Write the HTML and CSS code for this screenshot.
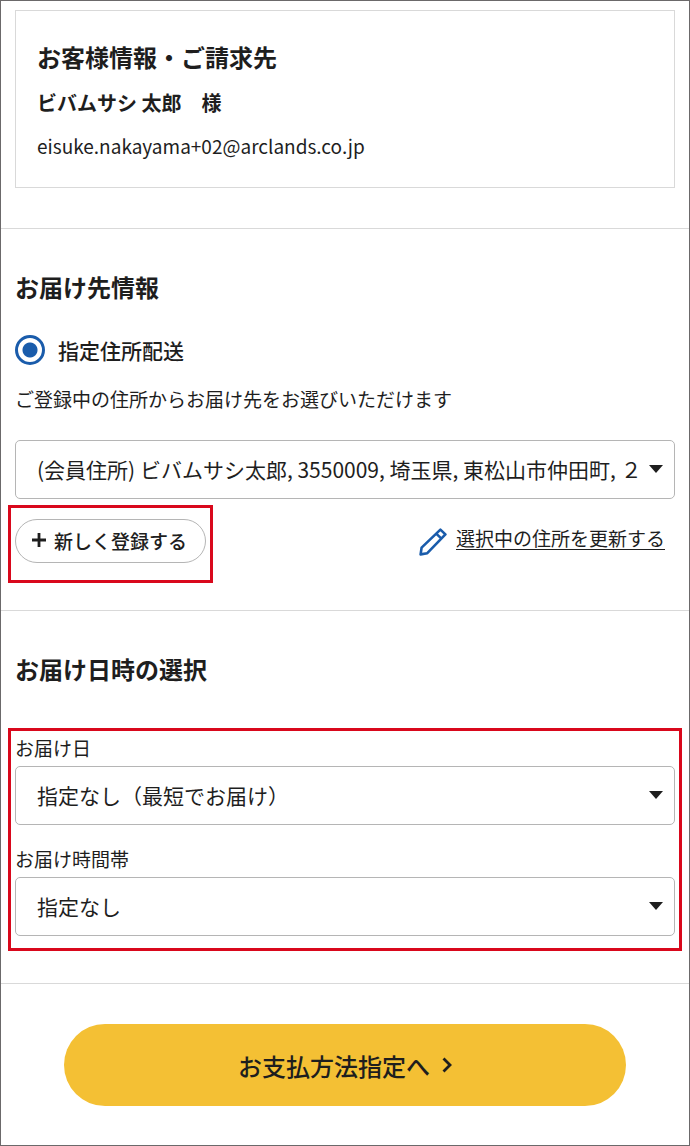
FILE: index.html
```
<!DOCTYPE html>
<html lang="ja">
<head>
    <meta charset="UTF-8">
    <meta name="viewport" content="width=device-width, initial-scale=1.0">
    <title>お届け先・お届け日時の指定</title>
    <link rel="stylesheet" href="styles.css">
</head>
<body>

    <form class="checkout">
        <section class="section section-customer">
            <div class="customer-card">
                <h2>お客様情報・ご請求先</h2>
                <p class="customer-name">ビバムサシ 太郎　様</p>
                <p class="customer-mail">eisuke.nakayama+02@arclands.co.jp</p>
            </div>
        </section>

        <section class="section section-address">
            <h2>お届け先情報</h2>
            <div class="radio">
                <input type="radio" name="delivery" id="delivery-address" checked>
                <label for="delivery-address">指定住所配送</label>
            </div>
            <label class="lead" for="address">ご登録中の住所からお届け先をお選びいただけます</label>
            <div class="select">
                <select id="address">
                    <option>(会員住所) ビバムサシ太郎, 3550009, 埼玉県, 東松山市仲田町, ２</option>
                </select>
            </div>
            <div class="address-actions">
                <div class="highlight">
                    <button type="button" class="btn-add">
                        <svg width="14" height="14" viewBox="0 0 14 14" aria-hidden="true">
                            <path d="M7 0v14M0 7h14" stroke="currentColor" stroke-width="2.8"/>
                        </svg>
                        新しく登録する
                    </button>
                </div>
                <a href="#" class="link-edit">
                    <svg width="28" height="28" viewBox="0 0 28 28" fill="none" stroke="#1a5cab" stroke-width="2.6" stroke-linejoin="round" aria-hidden="true">
                        <path d="M1.6 26.4l1-6.8L21.4 1.6l5 4.8L8.3 25.2z"/>
                        <path d="M17.2 5.6l5 4.8"/>
                    </svg>
                    <span>選択中の住所を更新する</span>
                </a>
            </div>
        </section>

        <section class="section section-date">
            <h2>お届け日時の選択</h2>
            <div class="highlight">
                <div class="field">
                    <label for="date">お届け日</label>
                    <div class="select">
                        <select id="date">
                            <option>指定なし（最短でお届け）</option>
                        </select>
                    </div>
                </div>
                <div class="field">
                    <label for="time">お届け時間帯</label>
                    <div class="select">
                        <select id="time">
                            <option>指定なし</option>
                        </select>
                    </div>
                </div>
            </div>
        </section>

        <div class="submit">
            <button type="submit" class="btn-next">
                お支払方法指定へ
                <svg width="10" height="16" viewBox="0 0 10 16" fill="none" aria-hidden="true">
                    <path d="M1.5 1.5L8 8l-6.5 6.5" stroke="currentColor" stroke-width="2.8"/>
                </svg>
            </button>
        </div>
    </form>

</body>
</html>
```
FILE: styles.css
```
* {
    box-sizing: border-box;
}

body {
    margin: 0;
    background-color: #fff;
    color: #1e1e1e;
    font-family: "Noto Sans CJK JP", sans-serif;
    font-size: 19px;
    line-height: 28px;
}

h2, p {
    margin: 0;
}

h2 {
    font-size: 24px;
    line-height: 36px;
    font-weight: bold;
}

button, select {
    font-family: inherit;
    color: inherit;
}

.checkout {
    border: 1px solid #6b696a;
    min-height: 100vh;
}

.section {
    padding: 40px 14px;
    border-bottom: 1px solid #d9d9d9;
}

/* customer */
.section-customer {
    padding-top: 9px;
}

.customer-card {
    padding: 28px 21px 27px;
    border: 1px solid #d9d9d9;
}

.customer-name {
    margin-top: 14px;
    font-size: 20px;
    font-weight: bold;
}

.customer-mail {
    margin-top: 15px;
}

/* address */
.section-address {
    padding-bottom: 27px;
}

.radio {
    display: flex;
    align-items: center;
    gap: 13px;
    margin-top: 30px;
    font-size: 21px;
    font-weight: 500;
}

.radio input {
    appearance: none;
    width: 30px;
    height: 30px;
    margin: 0;
    border: 3px solid #1a5cab;
    border-radius: 50%;
    background: radial-gradient(circle, #1a5cab 7px, #fff 8px);
}

.lead {
    display: block;
    margin: 20px 0 27px;
}

.select {
    position: relative;
}

.select select {
    display: block;
    appearance: none;
    width: 100%;
    height: 59px;
    padding: 0 20px 2px 21px;
    border: 1px solid #b5b5b5;
    border-radius: 5px;
    background-color: #fff;
    font-size: 21px;
}

.select::after {
    content: "";
    position: absolute;
    top: 25px;
    right: 12px;
    border: 7px solid transparent;
    border-top: 8px solid #1e1e1e;
    border-bottom: 0;
    pointer-events: none;
}

.highlight {
    margin: 0 -7px;
    padding: 4px;
    border: 3px solid #d9081c;
}

.address-actions {
    display: flex;
    justify-content: space-between;
    align-items: flex-start;
    padding: 6px 10px 0 0;
}

.address-actions .highlight {
    padding: 11px 4px 17px;
}

.btn-add {
    display: flex;
    align-items: center;
    gap: 8px;
    height: 44px;
    padding: 0 18px 2px 16px;
    border: 1px solid #b5b5b5;
    border-radius: 22px;
    background-color: #fff;
    font-size: 19px;
    font-weight: 500;
}

.link-edit {
    display: flex;
    gap: 9px;
    margin-top: 19px;
    color: inherit;
    text-decoration: none;
}

.link-edit svg {
    margin-top: 4px;
}

.link-edit span {
    text-decoration: underline;
    text-underline-offset: 3px;
}

/* date and time */
.section-date {
    padding-bottom: 32px;
}

.section-date .highlight {
    margin-top: 41px;
    padding: 3px 4px 12px;
}

.field label {
    display: block;
    margin-bottom: 4px;
}

.field + .field {
    margin-top: 20px;
}

/* next step */
.submit {
    padding: 40px 63px 32px;
}

.btn-next {
    display: flex;
    justify-content: center;
    align-items: center;
    gap: 12px;
    width: 100%;
    height: 82px;
    border: 0;
    border-radius: 41px;
    background-color: #f4c034;
    font-size: 24px;
    font-weight: 500;
}
```
